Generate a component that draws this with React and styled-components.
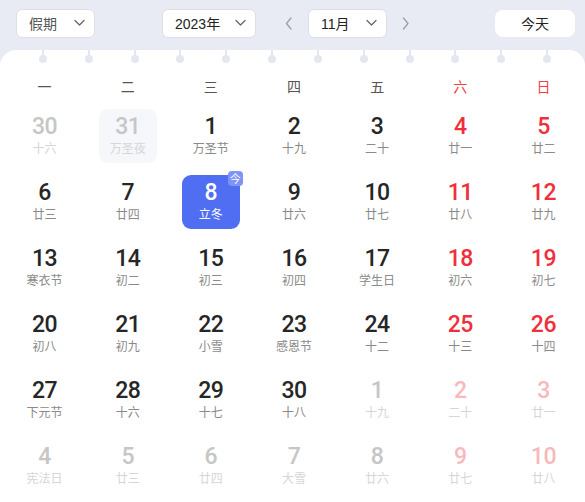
import React from 'react';
import styled, { createGlobalStyle } from 'styled-components';

const GlobalStyle = createGlobalStyle`
  html, body {
    margin: 0;
    padding: 0;
    background: #e8ebf3;
  }
  body {
    font-family: 'Liberation Sans', 'Noto Sans CJK SC', sans-serif;
  }
`;

const Page = styled.div`
  width: 585px;
  height: 502px;
  overflow: hidden;
  background: #e8ebf3;
`;

const Toolbar = styled.div`
  display: flex;
  align-items: center;
  height: 50px;
  padding: 0 10px 4px 16px;
  box-sizing: border-box;
`;

const Select = styled.div`
  display: flex;
  align-items: center;
  justify-content: space-between;
  box-sizing: border-box;
  width: ${p => p.width}px;
  height: 29px;
  padding: 0 9px 0 12px;
  margin-left: ${p => p.ml || 0}px;
  margin-right: ${p => p.mr || 0}px;
  background: #fff;
  border: 1px solid #dcdfe6;
  border-radius: 6px;
  font-size: 14px;
  color: ${p => (p.muted ? '#555' : '#222')};
`;

const MonthGroup = styled.div`
  display: flex;
  align-items: center;
  gap: 9px;
`;

const ArrowButton = styled.div`
  width: 20px;
  height: 29px;
  display: flex;
  align-items: center;
  justify-content: center;
`;

const TodayButton = styled.div`
  margin-left: auto;
  width: 80px;
  height: 27px;
  display: flex;
  align-items: center;
  justify-content: center;
  background: #fff;
  border-radius: 8px;
  font-size: 14px;
  color: #222;
`;

const Panel = styled.div`
  background: #fff;
  border-radius: 16px 16px 0 0;
  height: 452px;
`;

const Binder = styled.div`
  display: flex;
  justify-content: space-between;
  height: 20px;
  padding: 0 34px 0 39px;
`;

const Ring = styled.div`
  width: 8px;
  display: flex;
  flex-direction: column;
  align-items: center;
  &::before {
    content: '';
    width: 2px;
    height: 6px;
    background: #e4e7ef;
  }
  &::after {
    content: '';
    width: 8px;
    height: 8px;
    margin-top: -1px;
    border-radius: 50%;
    background: #e4e7ef;
  }
`;

const Grid = styled.div`
  display: grid;
  grid-template-columns: repeat(7, 1fr);
  padding: 0 0 0 3px;
`;

const WeekHead = styled.div`
  height: 32px;
  display: flex;
  align-items: center;
  justify-content: center;
  font-size: 14px;
  font-family: 'Noto Sans CJK SC', sans-serif;
  color: ${p => (p.weekend ? '#f23d46' : '#555')};
`;

const Days = styled(Grid)`
  padding-top: 7px;
  row-gap: 12px;
`;

const Cell = styled.div`
  position: relative;
  justify-self: center;
  width: 58px;
  height: 54px;
  box-sizing: border-box;
  padding-top: 6px;
  display: flex;
  flex-direction: column;
  align-items: center;
  border-radius: 9px;
  background: ${p => (p.selected ? '#4f6ef2' : p.soft ? '#f6f7fb' : 'transparent')};
`;

const numColor = p => {
  if (p.selected) return '#fff';
  if (p.outside) return p.weekend ? '#f8b9bc' : '#c6c6c6';
  return p.weekend ? '#ef2f3b' : '#262626';
};

const DayNum = styled.div`
  font-family: Roboto, 'DejaVu Sans', sans-serif;
  font-size: 23px;
  font-weight: 500;
  letter-spacing: -0.5px;
  line-height: 24px;
  color: ${numColor};
`;

const Lunar = styled.div`
  margin-top: 1px;
  font-family: 'Noto Sans CJK SC', sans-serif;
  font-size: 12px;
  line-height: 16px;
  color: ${p => (p.selected ? '#fff' : p.outside ? '#d6d6d6' : '#8a8a8a')};
`;

const Badge = styled.div`
  position: absolute;
  top: -4px;
  right: -3px;
  width: 15px;
  height: 15px;
  border-radius: 4px;
  background: #7d94f6;
  color: #fff;
  font-family: 'Noto Sans CJK SC', sans-serif;
  font-size: 11px;
  line-height: 15px;
  text-align: center;
`;

const Chevron = ({ dir = 'down', color = '#666' }) => {
  const d = {
    down: 'M1 1.5 L5.5 6 L10 1.5',
    left: 'M6 1 L1.5 6.5 L6 12',
    right: 'M1.5 1 L6 6.5 L1.5 12',
  }[dir];
  const size = dir === 'down' ? [11, 8] : [8, 13];
  return (
    <svg width={size[0]} height={size[1]} viewBox={`0 0 ${size[0]} ${size[1]}`}>
      <path d={d} fill="none" stroke={color} strokeWidth="1.3" strokeLinecap="round" strokeLinejoin="round" />
    </svg>
  );
};

const weekdays = ['一', '二', '三', '四', '五', '六', '日'];

// [day, lunar, outside-month]
const rows = [
  [[30, '十六', 1], [31, '万圣夜', 1], [1, '万圣节'], [2, '十九'], [3, '二十'], [4, '廿一'], [5, '廿二']],
  [[6, '廿三'], [7, '廿四'], [8, '立冬'], [9, '廿六'], [10, '廿七'], [11, '廿八'], [12, '廿九']],
  [[13, '寒衣节'], [14, '初二'], [15, '初三'], [16, '初四'], [17, '学生日'], [18, '初六'], [19, '初七']],
  [[20, '初八'], [21, '初九'], [22, '小雪'], [23, '感恩节'], [24, '十二'], [25, '十三'], [26, '十四']],
  [[27, '下元节'], [28, '十六'], [29, '十七'], [30, '十八'], [1, '十九', 1], [2, '二十', 1], [3, '廿一', 1]],
  [[4, '宪法日', 1], [5, '廿三', 1], [6, '廿四', 1], [7, '大雪', 1], [8, '廿六', 1], [9, '廿七', 1], [10, '廿八', 1]],
];

const App = () => {
  return (
    <Page>
      <GlobalStyle />
      <Toolbar>
        <Select width={79} muted>
          假期 <Chevron />
        </Select>
        <Select width={94} ml={67} mr={23}>
          2023年 <Chevron />
        </Select>
        <MonthGroup>
          <ArrowButton>
            <Chevron dir="left" color="#9a9ea8" />
          </ArrowButton>
          <Select width={79}>
            11月 <Chevron />
          </Select>
          <ArrowButton>
            <Chevron dir="right" color="#9a9ea8" />
          </ArrowButton>
        </MonthGroup>
        <TodayButton>今天</TodayButton>
      </Toolbar>
      <Panel>
        <Binder>
          {Array.from({ length: 12 }).map((_, i) => (
            <Ring key={i} />
          ))}
        </Binder>
        <Grid>
          {weekdays.map((w, i) => (
            <WeekHead key={w} weekend={i > 4}>
              {w}
            </WeekHead>
          ))}
        </Grid>
        <Days>
          {rows.map((row, r) =>
            row.map(([day, lunar, outside], c) => {
              const selected = r === 1 && c === 2;
              const soft = r === 0 && c === 1;
              return (
                <Cell key={`${r}-${c}`} selected={selected} soft={soft}>
                  <DayNum outside={outside} weekend={c > 4} selected={selected}>
                    {day}
                  </DayNum>
                  <Lunar outside={outside} selected={selected}>
                    {lunar}
                  </Lunar>
                  {selected && <Badge>今</Badge>}
                </Cell>
              );
            })
          )}
        </Days>
      </Panel>
    </Page>
  );
};

export default App;
